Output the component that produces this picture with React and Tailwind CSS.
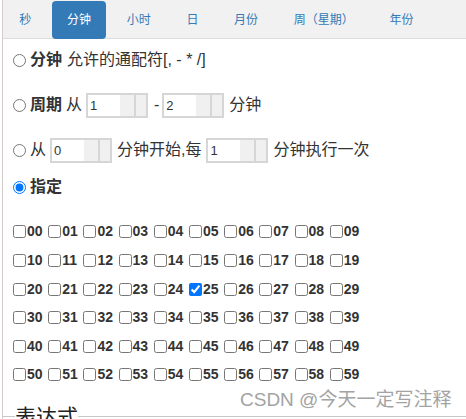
import React from 'react';

const tabs = ['秒', '分钟', '小时', '日', '月份', '周（星期）', '年份'];

const NumBox = ({ value }) => (
  <div className="flex w-[62px] h-[25px] border-2 border-[#d6d6d6] bg-white">
    <span className="flex-1 pl-[2px] text-[13px] leading-[21px] text-[#333]">{value}</span>
    <span className="w-[14px] bg-[#f0f0f0]"></span>
    <span className="w-[12px] bg-[#f0f0f0] border-l-2 border-[#d6d6d6]"></span>
  </div>
);

const CheckItem = ({ n, checked }) => (
  <label className="flex items-center w-[35.2px]">
    <input type="checkbox" defaultChecked={checked} className="m-0 w-[13px] h-[13px]" />
    <span className="ml-[1px] text-[14px] font-bold text-[#333]">{String(n).padStart(2, '0')}</span>
  </label>
);

export default function App() {
  const rows = [0, 1, 2, 3, 4, 5];

  return (
    <div className="relative w-[466px] h-[419px] overflow-hidden bg-white text-[#333] font-['Liberation_Sans','Noto_Sans_CJK_SC',sans-serif]">
      <div className="ml-[2px] h-full border-l border-[#d2cbcb]">
        {/* tab bar */}
        <div className="flex h-[39px] bg-[#f1f1f1] border-b border-[#dddddd] gap-[5.7px] pl-[1.3px]">
          {tabs.map((t, i) => (
            <div
              key={t}
              className={`mt-[1px] h-[38px] px-[15px] flex items-center text-[12px] rounded-[4px] ${
                i === 1 ? 'bg-[#337ab7] text-white' : 'text-[#337ab7]'
              }`}
            >
              {t}
            </div>
          ))}
        </div>

        <div className="pl-[10px] text-[16px]">
          {/* 分钟 */}
          <div className="flex items-center h-[30px] mt-[6px]">
            <input type="radio" name="min" className="m-0 w-[13px] h-[13px]" />
            <span className="ml-[4px] font-bold">分钟</span>
            <span className="ml-[5px]">允许的通配符[, - * /]</span>
          </div>

          {/* 周期 */}
          <div className="flex items-center h-[30px] mt-[15px]">
            <input type="radio" name="min" className="m-0 w-[13px] h-[13px]" />
            <span className="ml-[4px] font-bold">周期</span>
            <span className="ml-[4px]">从</span>
            <div className="ml-[4px]"><NumBox value="1" /></div>
            <span className="ml-[6px]">-</span>
            <div className="ml-[3px]"><NumBox value="2" /></div>
            <span className="ml-[5px]">分钟</span>
          </div>

          {/* 从 ... 每 */}
          <div className="flex items-center h-[30px] mt-[15px]">
            <input type="radio" name="min" className="m-0 w-[13px] h-[13px]" />
            <span className="ml-[4px]">从</span>
            <div className="ml-[4px]"><NumBox value="0" /></div>
            <span className="ml-[5px]">分钟开始,每</span>
            <div className="ml-[5px]"><NumBox value="1" /></div>
            <span className="ml-[5px]">分钟执行一次</span>
          </div>

          {/* 指定 */}
          <div className="flex items-center h-[30px] mt-[7px]">
            <input type="radio" name="min" defaultChecked className="m-0 w-[13px] h-[13px]" />
            <span className="ml-[4px] font-bold">指定</span>
          </div>

          {/* checkbox grid */}
          <div className="mt-[15.7px]">
            {rows.map((r) => (
              <div key={r} className="flex items-center h-[28.6px]">
                {Array.from({ length: 10 }, (_, c) => {
                  const n = r * 10 + c;
                  return <CheckItem key={n} n={n} checked={n === 25} />;
                })}
              </div>
            ))}
          </div>
        </div>

        {/* 表达式 fieldset legend */}
        <div className="flex items-center h-[24px] mt-[15.7px]">
          <span className="w-[12px] h-px bg-[#c8c8c8]"></span>
          <span className="text-[21px] leading-[24px] text-[#222]">表达式</span>
          <span className="flex-1 h-px bg-[#c8c8c8]"></span>
        </div>
      </div>

      {/* watermark */}
      <div className="absolute left-[240px] top-[388px] text-[19px] leading-[24px] text-[#a3a3a3] whitespace-nowrap">
        CSDN @今天一定写注释
      </div>
    </div>
  );
}
